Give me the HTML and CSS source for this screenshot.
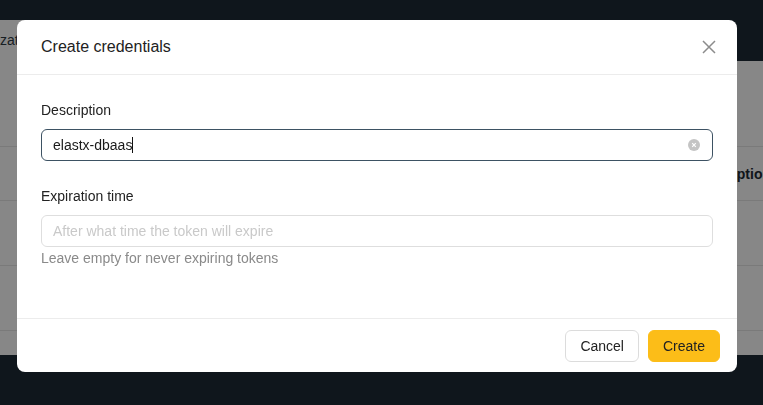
FILE: index.html
```html
<!DOCTYPE html>
<html lang="en">
<head>
  <meta charset="UTF-8">
  <title>Credentials</title>
  <meta name="viewport" content="width=device-width, initial-scale=1.0">
  <link rel="stylesheet" href="styles.css">
</head>
<body>

<div class="topbar"></div>

<div class="toolbar">
  <div class="crumb">Organization</div>
</div>

<div class="card">
  <div class="card-tools"></div>
  <div class="row head">
    <span class="col-name">Name</span>
    <span class="col-desc">Description</span>
  </div>
  <div class="row"></div>
  <div class="row"></div>
  <div class="row last"></div>
</div>

<div class="overlay">
  <div class="modal">
    <div class="modal-header">
      <h2>Create credentials</h2>
      <button class="close" aria-label="Close">
        <svg width="14" height="14" viewBox="0 0 14 14">
          <path d="M1 1L13 13M13 1L1 13" stroke="#8c8c8c" stroke-width="1.5" fill="none"/>
        </svg>
      </button>
    </div>

    <div class="modal-body">
      <div class="form-item">
        <label class="label">Description</label>
        <div class="field focused">
          <span class="value">elastx-dbaas</span>
          <span class="clear">
            <svg width="12" height="12" viewBox="0 0 12 12">
              <circle cx="6" cy="6" r="6" fill="#c4c4c4"/>
              <path d="M4.2 4.2L7.8 7.8M7.8 4.2L4.2 7.8" stroke="#fff" stroke-width="1.2"/>
            </svg>
          </span>
        </div>
      </div>

      <div class="form-item">
        <label class="label">Expiration time</label>
        <div class="field">
          <span class="placeholder">After what time the token will expire</span>
        </div>
        <div class="help">Leave empty for never expiring tokens</div>
      </div>
    </div>

    <div class="modal-footer">
      <button class="btn">Cancel</button>
      <button class="btn primary">Create</button>
    </div>
  </div>
</div>

</body>
</html>
```

FILE: styles.css
```css
* { box-sizing: border-box; }
body {
  margin: 0;
  background: #1e2b36;
  color: #222;
  font-family: "Liberation Sans", Arial, sans-serif;
  font-size: 14px;
  height: 100vh;
  overflow: hidden;
}

/* page behind the dialog */
.topbar { height: 20px; }
.toolbar {
  height: 41px;
  display: flex;
}
.crumb {
  width: 420px;
  background: #fff;
  color: #2f3b44;
  line-height: 41px;
  text-indent: -42px;
  overflow: hidden;
  white-space: nowrap;
}
.card {
  background: #fff;
  height: 294px;
}
.card-tools {
  height: 86px;
  border-bottom: 1px solid #e6e6e6;
}
.row {
  height: 65px;
  border-bottom: 1px solid #e6e6e6;
  display: flex;
  padding-left: 24px;
  align-items: center;
  white-space: nowrap;
}
.row.head {
  height: 54px;
  font-weight: bold;
  color: #1e2a33;
}
.row.last { border-bottom: none; }
.col-name { flex: 0 0 670px; }
.col-desc { flex: none; }

/* dialog */
.overlay {
  position: fixed;
  top: 0; left: 0;
  width: 100%; height: 100%;
  background: rgba(0, 0, 0, 0.47);
  padding: 20px 0 0 17px;
}
.modal {
  width: 720px;
  height: 352px;
  background: #fff;
  border-radius: 8px;
  display: flex;
  flex-direction: column;
}
.modal-header {
  height: 55px;
  padding: 0 20px 0 24px;
  border-bottom: 1px solid #ececec;
  display: flex;
  align-items: center;
  justify-content: space-between;
}
.modal-header h2 {
  margin: 0;
  font-size: 16px;
  font-weight: normal;
  color: #222;
}
.close {
  border: none;
  background: none;
  padding: 0;
  width: 16px;
  height: 16px;
  display: flex;
  align-items: center;
  justify-content: center;
  cursor: pointer;
}

.modal-body {
  flex: 1;
  padding: 25px 24px 0;
  border-bottom: 1px solid #ececec;
}
.form-item { margin-bottom: 25px; }
.label {
  display: block;
  line-height: 20px;
  margin-bottom: 9px;
  color: #222;
}
.field {
  height: 32px;
  border: 1px solid #dedede;
  border-radius: 6px;
  padding: 0 11px;
  display: flex;
  align-items: center;
  justify-content: space-between;
}
.field.focused { border-color: #3d5263; }
.value {
  color: #1a1a1a;
  border-right: 1px solid #111;
  line-height: 16px;
}
.clear {
  display: flex;
  margin-right: 1px;
}
.placeholder { color: #c9c9c9; }
.help {
  color: #8a8a8a;
  line-height: 20px;
  margin-top: 1px;
}

.modal-footer {
  height: 53px;
  padding: 0 17px;
  display: flex;
  align-items: center;
  justify-content: flex-end;
  gap: 9px;
}
.btn {
  height: 32px;
  padding: 0 14px;
  font-family: inherit;
  font-size: 14px;
  color: #222;
  background: #fff;
  border: 1px solid #dcdcdc;
  border-radius: 6px;
  cursor: pointer;
}
.btn.primary {
  background: #fcbd18;
  border-color: #fcbd18;
}
```
